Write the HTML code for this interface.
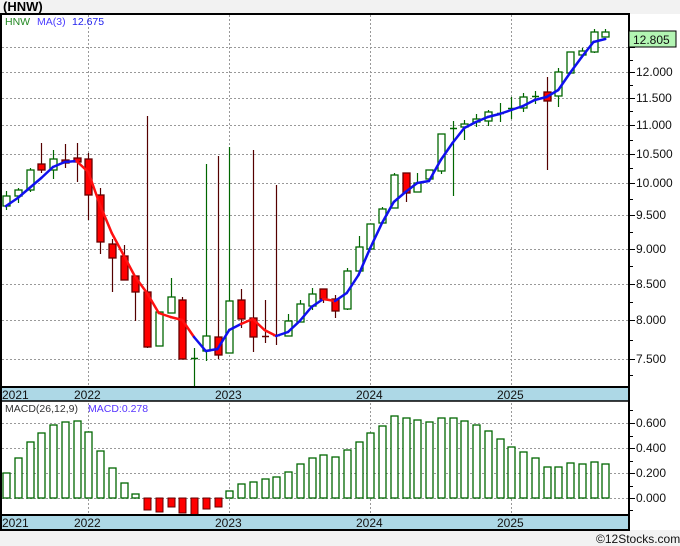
<!DOCTYPE html>
<html><head><meta charset="utf-8"><style>
html,body{margin:0;padding:0;background:#f2f2f2;}
svg{display:block;font-family:"Liberation Sans","DejaVu Sans",sans-serif;}
</style></head><body>
<svg id="s" width="680" height="546" viewBox="0 0 680 546" xmlns="http://www.w3.org/2000/svg">
<rect x="0" y="0" width="680" height="546" fill="#f2f2f2"/>
<rect x="1" y="14" width="679" height="516" fill="#ffffff"/>
<g id="grid" stroke="#999" stroke-width="1" stroke-dasharray="2,2"></g>
<g id="macd"></g>
<g id="cand"></g>
<g id="ma" fill="none" stroke-width="2.5" stroke-linejoin="round"></g>
<!-- borders -->
<g fill="none" stroke="#000" stroke-width="2">
<rect x="1" y="14" width="628" height="516"/>
<line x1="1" y1="387" x2="629" y2="387"/>
<line x1="1" y1="515" x2="629" y2="515"/>
</g>
<rect x="2" y="388" width="626" height="13" fill="#add8e6"/>
<rect x="2" y="516" width="626" height="13" fill="#add8e6"/>
<line x1="1" y1="401" x2="629" y2="401" stroke="#000" stroke-width="1.5"/>
<line x1="1" y1="530" x2="629" y2="530" stroke="#000" stroke-width="1.5"/>
<g id="ticks" stroke="#000" stroke-width="1"></g>
<g font-size="12" fill="#111">
<text x="2" y="399">2021</text><text x="74" y="399">2022</text><text x="215" y="399">2023</text><text x="356" y="399">2024</text><text x="497" y="399">2025</text>
<text x="2" y="527">2021</text><text x="74" y="527">2022</text><text x="215" y="527">2023</text><text x="356" y="527">2024</text><text x="497" y="527">2025</text>
</g>
<g font-size="12" fill="#111">
<text x="636" y="76">12.000</text>
<text x="636" y="102">11.500</text>
<text x="636" y="129">11.000</text>
<text x="636" y="158">10.500</text>
<text x="636" y="187">10.000</text>
<text x="636" y="219">9.500</text>
<text x="636" y="253">9.000</text>
<text x="636" y="288">8.500</text>
<text x="636" y="324">8.000</text>
<text x="636" y="363">7.500</text>
<text x="636" y="427">0.600</text>
<text x="636" y="452">0.400</text>
<text x="636" y="477">0.200</text>
<text x="636" y="502">0.000</text>
</g>
<rect x="629" y="31" width="47" height="16" fill="#b3f5b3" stroke="#000" stroke-width="1"/>
<text x="633" y="44" font-size="12" fill="#111">12.805</text>
<text x="3" y="11" font-size="13" font-weight="bold" fill="#000">(HNW)</text>
<text x="5" y="25" font-size="10.5" fill="#228822">HNW</text>
<text x="37" y="25" font-size="10.5" fill="#4a3cff">MA(3)</text>
<text x="72" y="25" font-size="10.5" fill="#2222ee">12.675</text>
<text x="5" y="412" font-size="10.5" fill="#333">MACD(26,12,9)</text>
<text x="88" y="412" font-size="10.5" fill="#5533ff">MACD:0.278</text>
<text x="596" y="543" font-size="12" fill="#111">©12Stocks.com</text>
</svg>
<script>
var NS="http://www.w3.org/2000/svg";
function el(p,t,a){var e=document.createElementNS(NS,t);for(var k in a)e.setAttribute(k,a[k]);document.getElementById(p).appendChild(e);return e;}
[47,72,98,125,154,183,215,249,284,320,359,423,448,473,498].forEach(function(y){el("grid","line",{x1:2,y1:y+.5,x2:629,y2:y+.5});});
[88,229,370,511].forEach(function(x){el("grid","line",{x1:x+.5,y1:15,x2:x+.5,y2:529});});
[47,72,98,125,154,183,215,249,284,320,359,423,448,473,498].forEach(function(y){el("ticks","line",{x1:629,y1:y+.5,x2:635,y2:y+.5});});
[60,85,111,140,168,199,232,266,302,340,375,410,436,461,486,510].forEach(function(y){el("ticks","line",{x1:629,y1:y+.5,x2:633,y2:y+.5});});
// candles: [color, wickTop, wickBot, bodyTop, bodyBot]
var C=[
["g",191,210,196,206],["g",188,203,190,196],["g",168,192,170,190],["r",143,173,164,170],["g",150,179,159,170],["r",144,168,160,163],["r",143,182,158,162],["r",153,220,159,195],["r",188,254,195,242],["r",239,292,244,258],["r",245,280,256,280],["r",276,321,276,292],["r",116,348,292,347],
["g",312,346,312,346],["g",278,313,297,313],["r",297,359,300,359],["g",348,387,358,359],["g",164,361,336,351],["r",156,359,337,355],["g",147,353,301,353],["r",289,328,300,319],["r",150,352,318,337],["r",300,343,336,338],["r",185,345,335,337],["g",314,336,321,336],["g",300,322,304,322],
["g",288,310,294,306],["r",289,303,289,299],["r",295,318,299,311],["g",268,310,271,309],["g",236,271,247,271],["g",224,249,224,249],["g",207,223,209,223],["g",173,208,175,208],["r",173,202,173,193],["g",173,192,183,192],["g",170,179,170,179],["g",134,174,134,171],["g",121,196,128,130],
["g",120,140,124,127],["g",114,127,119,122],["g",110,126,112,121],["g",103,122,113,115],["g",97,119,108,110],["g",93,112,97,108],["g",91,104,96,98],["r",77,170,92,101],["g",68,107,72,96],["g",52,73,52,73],["g",48,55,51,55],["g",29,53,32,52],["g",29,37,32,37]];
function cx(i){return 6+i*11.75;}
C.forEach(function(c,i){var x=Math.round(cx(i));var red=c[0]=="r";
el("cand","line",{x1:x+.5,y1:c[1],x2:x+.5,y2:c[2],stroke:red?"#550000":"#006600","stroke-width":1.2});
var h=Math.max(c[4]-c[3],1);
if(h<=2){el("cand","line",{x1:x-3,y1:c[3]+.5,x2:x+4,y2:c[3]+.5,stroke:red?"#660000":"#006600","stroke-width":1.5});}
else el("cand","rect",{x:x-3,y:c[3],width:7,height:h,fill:red?"#ff0000":"#ffffff",stroke:red?"#660000":"#006600","stroke-width":1.3});});
// MA
var M=[206,198,188,178,167,162,161,172,205,233,255,277,293,313,317,320,337,351,349,330,324,319,330,336,332,321,307,299,301,293,275,248,223,202,192,183,181,160,143,128,122,117,114,110,106,100,97,90,73,57,42,39];
for(var i=0;i<M.length-1;i++){var red=(i>=6&&i<16)||(i>=20&&i<23)||(i==27);
el("ma","line",{x1:cx(i),y1:M[i],x2:cx(i+1),y2:M[i+1],stroke:red?"#ff1010":"#1010ee","stroke-linecap":"round"});}
// MACD
var T=[473,458,442,433,425,422,421,432,451,468,483,494,510,512,507,513,515,509,507,491,484,482,479,477,472,464,458,455,457,450,442,433,426,416,418,420,422,418,418,421,425,431,439,447,452,458,467,467,463,464,462,464];
T.forEach(function(t,i){var x=Math.round(cx(i));
if(t>498)el("macd","rect",{x:x-3,y:498,width:7,height:t-498,fill:"#ff0000",stroke:"#660000","stroke-width":1});
else el("macd","rect",{x:x-3,y:t,width:7,height:498-t,fill:"#fff",stroke:"#006600","stroke-width":1.3});});
</script>
</body></html>
